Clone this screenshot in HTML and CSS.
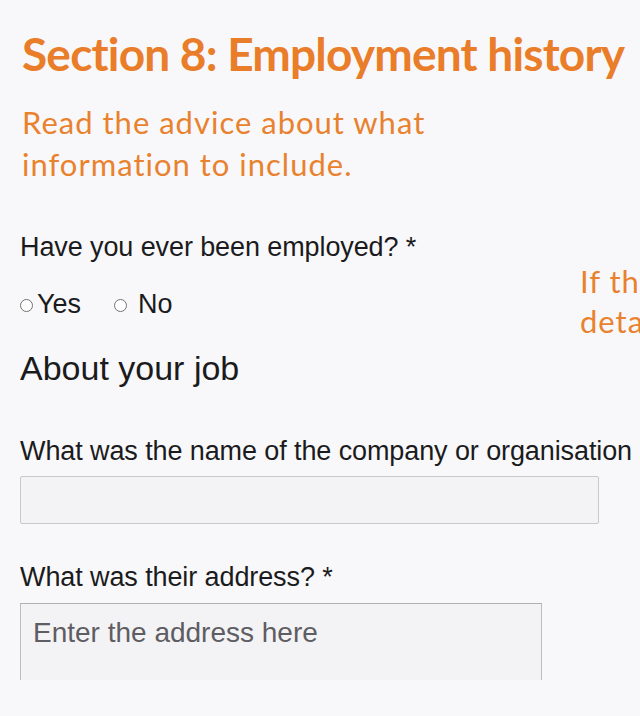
FILE: index.html
```html
<!DOCTYPE html>
<html lang="en">
<head>
<meta charset="utf-8">
<title>Section 8: Employment history</title>
<link rel="stylesheet" href="styles.css">
</head>
<body>
<main class="page">
  <h1 class="title">Section 8: Employment history</h1>
  <p class="advice">Read the advice about what<br>information to include.</p>

  <div class="row">
    <div class="question">
      <p class="label">Have you ever been employed? *</p>
      <div class="radios">
        <label class="radio"><input type="radio" name="employed"><span>Yes</span></label>
        <label class="radio radio-wide"><input type="radio" name="employed"><span>No</span></label>
      </div>
    </div>
    <aside class="hint">
      <span class="hint-line">If these apply to you,</span>
      <span class="hint-line">details of each job</span>
    </aside>
  </div>

  <h2 class="subhead">About your job</h2>

  <label class="label field-label" for="company">What was the name of the company or organisation</label>
  <input class="text-input" id="company" type="text">

  <label class="label field-label address-label" for="address">What was their address? *</label>
  <div class="area-clip">
    <textarea class="text-area" id="address" placeholder="Enter the address here"></textarea>
  </div>
</main>
</body>
</html>
```
FILE: styles.css
```css
html, body {
  margin: 0;
  padding: 0;
  background: #f8f8fa;
  overflow: hidden;
}

.page {
  width: 640px;
  height: 716px;
  box-sizing: border-box;
  padding: 26px 0 0 20px;
  overflow: hidden;
}

.title {
  margin: 0 0 0 2px;
  font-family: Lato, "Liberation Sans", sans-serif;
  font-weight: 700;
  font-size: 46px;
  line-height: 56px;
  color: #e97d2a;
  white-space: nowrap;
  letter-spacing: -0.8px;
}

.advice {
  margin: 19px 0 0 2px;
  font-family: Lato, "Liberation Sans", sans-serif;
  font-size: 31px;
  line-height: 42px;
  color: #e9822e;
  letter-spacing: 1px;
  font-variant-ligatures: none;
}

.row {
  display: flex;
  margin-top: 46px;
}

.question {
  width: 560px;
  flex: none;
}

.label {
  display: block;
  margin: 0;
  font-family: "Liberation Sans", Arial, sans-serif;
  font-size: 27px;
  line-height: 32px;
  color: #1b1b1d;
  white-space: nowrap;
  letter-spacing: -0.1px;
}

.radios {
  display: flex;
  gap: 33px;
  margin-top: 26px;
}

.radio {
  display: flex;
  align-items: center;
  gap: 4px;
  font-family: "Liberation Sans", Arial, sans-serif;
  font-size: 27px;
  line-height: 30px;
  color: #1b1b1d;
}

.radio-wide {
  gap: 11px;
}

.radio input {
  appearance: none;
  -webkit-appearance: none;
  width: 13px;
  height: 13px;
  margin: 2px 0 0 0;
  border: 1px solid #727272;
  border-radius: 50%;
  background: #fff;
  box-sizing: border-box;
}

.hint {
  margin-top: 30px;
  font-family: Lato, "Liberation Sans", sans-serif;
  font-size: 31px;
  line-height: 40px;
  color: #e9822e;
  white-space: nowrap;
  letter-spacing: 1px;
}

.hint-line {
  display: block;
}

.subhead {
  margin: 7px 0 0 0;
  font-family: "Liberation Sans", Arial, sans-serif;
  font-weight: 400;
  font-size: 34px;
  line-height: 40px;
  color: #1b1b1d;
  letter-spacing: 0;
}

.field-label {
  margin-top: 47px;
}

.text-input {
  display: block;
  width: 579px;
  height: 48px;
  margin: 9px 0 0 0;
  box-sizing: border-box;
  border: 1px solid #c9c9cc;
  border-radius: 2px;
  background: #f3f3f5;
  font: 26px "Liberation Sans", Arial, sans-serif;
}

.address-label {
  margin-top: 37px;
}

.area-clip {
  width: 522px;
  height: 77px;
  margin-top: 10px;
  overflow: hidden;
}

.text-area {
  display: block;
  width: 522px;
  height: 140px;
  margin: 0;
  box-sizing: border-box;
  padding: 13px 12px;
  border: 1px solid #bdbdc0;
  border-top-color: #b0b0b3;
  background: #f3f3f5;
  font: 28px "Liberation Sans", Arial, sans-serif;
  color: #333;
  resize: none;
}

.text-area::placeholder {
  color: #5e5d63;
}
```
